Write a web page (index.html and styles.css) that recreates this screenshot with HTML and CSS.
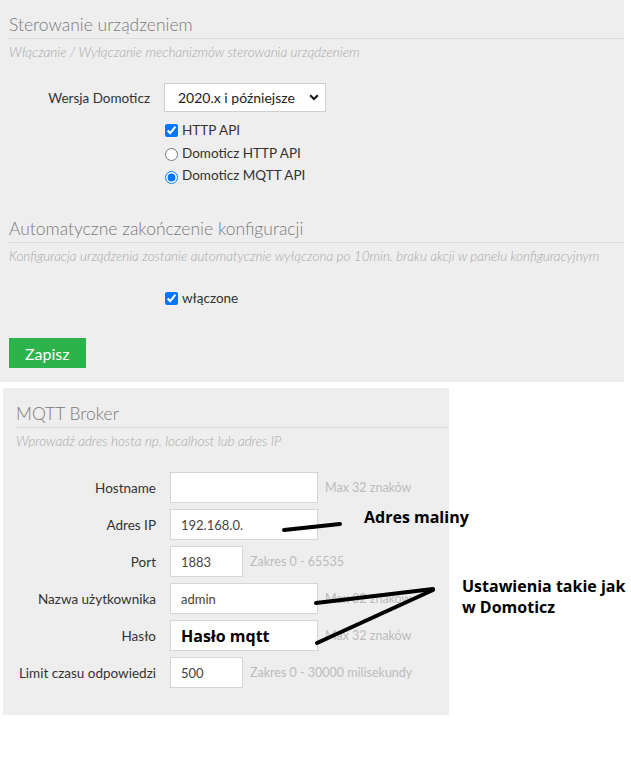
FILE: index.html
```html
<!DOCTYPE html>
<html lang="pl">
<head>
  <meta charset="UTF-8" />
  <title>Konfiguracja Domoticz</title>
  <link rel="stylesheet" href="styles.css">
</head>
<body>
  <div class="sheet">
    <form class="panel panel-main">
      <section class="group">
        <h2 class="group-title">Sterowanie urządzeniem</h2>
        <p class="group-desc">Włączanie / Wyłączanie mechanizmów sterowania urządzeniem</p>
        <div class="form-grid">
          <label class="row-label" for="version">Wersja Domoticz</label>
          <div class="select-wrap">
            <select id="version">
              <option>2020.x i późniejsze</option>
              <option>4.x</option>
            </select>
            <svg class="chevron" width="10" height="7" viewBox="0 0 10 7">
              <path d="M1.2 1.2 L5 5 L8.8 1.2" fill="none" stroke="#111" stroke-width="2" />
            </svg>
          </div>
          <div class="options">
            <label class="opt"><input type="checkbox" checked> HTTP API</label>
            <label class="opt"><input type="radio" name="api"> Domoticz HTTP API</label>
            <label class="opt"><input type="radio" name="api" checked> Domoticz MQTT API</label>
          </div>
        </div>
      </section>

      <section class="group group-auto">
        <h2 class="group-title">Automatyczne zakończenie konfiguracji</h2>
        <p class="group-desc">Konfiguracja urządzenia zostanie automatycznie wyłączona po 10min. braku akcji w panelu konfiguracyjnym</p>
        <div class="form-grid">
          <div class="options">
            <label class="opt"><input type="checkbox" checked> włączone</label>
          </div>
        </div>
      </section>

      <button type="button" class="btn-save">Zapisz</button>
    </form>

    <form class="panel panel-mqtt">
      <h2 class="group-title">MQTT Broker</h2>
      <p class="group-desc">Wprowadź adres hosta np. localhost lub adres IP</p>
      <div class="form-grid mqtt-grid">
        <label class="row-label">Hostname</label>
        <div class="field"><input class="inp" type="text"><span class="hint">Max 32 znaków</span></div>

        <label class="row-label">Adres IP</label>
        <div class="field"><input class="inp" type="text" value="192.168.0."></div>

        <label class="row-label">Port</label>
        <div class="field"><input class="inp inp-short" type="text" value="1883"><span class="hint">Zakres 0 - 65535</span></div>

        <label class="row-label">Nazwa użytkownika</label>
        <div class="field"><input class="inp" type="text" value="admin"><span class="hint">Max 32 znaków</span></div>

        <label class="row-label">Hasło</label>
        <div class="field"><input class="inp inp-note" type="text" value="Hasło mqtt"><span class="hint">Max 32 znaków</span></div>

        <label class="row-label">Limit czasu odpowiedzi</label>
        <div class="field"><input class="inp inp-short" type="text" value="500"><span class="hint">Zakres 0 - 30000 milisekundy</span></div>
      </div>
    </form>

    <!-- notes drawn over the screenshot -->
    <div class="annotations">
      <svg class="marks" width="631" height="772" viewBox="0 0 631 772">
        <g stroke="#000" stroke-width="4" stroke-linecap="round">
          <line x1="284" y1="530" x2="340" y2="524" />
          <line x1="316" y1="603" x2="433" y2="589" />
          <line x1="317" y1="643" x2="433" y2="590" />
        </g>
      </svg>
      <div class="note note-ip">Adres maliny</div>
      <div class="note note-same">Ustawienia takie jak<br>w Domoticz</div>
    </div>
  </div>
</body>
</html>
```

FILE: styles.css
```css
body {
  margin: 0;
  font-family: Lato, "Open Sans", sans-serif;
  background: #fff;
  color: #333;
}
.sheet {
  position: relative;
  width: 631px;
  height: 772px;
}
.panel {
  background: #eeeeee;
}
.panel-main {
  width: 615px;
  padding: 14px 0 14px 9px;
}
.group-title {
  margin: 0;
  font-size: 17.5px;
  line-height: 22px;
  font-weight: 300;
  color: #7a7a7a;
  padding-bottom: 2px;
  border-bottom: 1px solid #dcdcdc;
}
.group-desc {
  margin: 4px 0 0;
  font-size: 13.5px;
  line-height: 18px;
  font-style: italic;
  font-weight: 300;
  color: #a8a8a8;
}
.form-grid {
  display: grid;
  grid-template-columns: 141px auto;
  column-gap: 14px;
  margin-top: 22px;
}
.row-label {
  font-size: 13.5px;
  text-align: right;
  align-self: center;
  white-space: nowrap;
  color: #333;
}
.select-wrap {
  position: relative;
  width: 162px;
  height: 29px;
}
.select-wrap select {
  appearance: none;
  width: 100%;
  height: 100%;
  padding: 0 0 0 13px;
  border: 1px solid #cfcfcf;
  border-radius: 0;
  background: #fff;
  font-family: inherit;
  font-size: 14px;
  color: #222;
}
.chevron {
  position: absolute;
  right: 7px;
  top: 11px;
  pointer-events: none;
}
.options {
  grid-column: 2;
  margin-top: 7px;
}
.opt {
  display: flex;
  align-items: center;
  height: 22.5px;
  font-size: 13.5px;
  color: #333;
}
.opt input {
  width: 13px;
  height: 13px;
  margin: 0 4px 0 1px;
}
.opt input[type="radio"] {
  margin-top: 4px;
}
.group-auto {
  margin-top: 31.5px;
}
.group-auto .options {
  margin-top: 0;
}
.btn-save {
  margin-top: 28.5px;
  height: 30px;
  padding: 0 16px;
  border: 0;
  background: #2db34b;
  color: #fff;
  font-family: inherit;
  font-size: 16px;
}

.panel-mqtt {
  margin: 6px 0 0 3px;
  width: 433px;
  padding: 15px 0 27px 13px;
}
.mqtt-grid {
  grid-template-columns: 140px auto;
  row-gap: 6px;
}
.field {
  display: flex;
  align-items: center;
}
.inp {
  box-sizing: border-box;
  width: 148px;
  height: 31px;
  padding: 0 0 0 10px;
  border: 1px solid #d6d6d6;
  background: #fff;
  font-family: inherit;
  font-size: 13px;
  color: #444;
}
.inp-short {
  width: 73px;
}
.inp-note {
  font-family: "Open Sans", sans-serif;
  font-weight: 700;
  font-size: 16px;
  color: #000;
}
.hint {
  margin-left: 7px;
  font-size: 12.5px;
  color: #bcbcbc;
}

.annotations {
  position: absolute;
  left: 0;
  top: 0;
  width: 631px;
  height: 772px;
  pointer-events: none;
}
.marks {
  position: absolute;
  left: 0;
  top: 0;
}
.note {
  position: absolute;
  font-family: "Open Sans", sans-serif;
  font-weight: 700;
  font-size: 16px;
  line-height: 21px;
  color: #000;
}
.note-ip {
  left: 364px;
  top: 507px;
}
.note-same {
  left: 462px;
  top: 576px;
}
```
